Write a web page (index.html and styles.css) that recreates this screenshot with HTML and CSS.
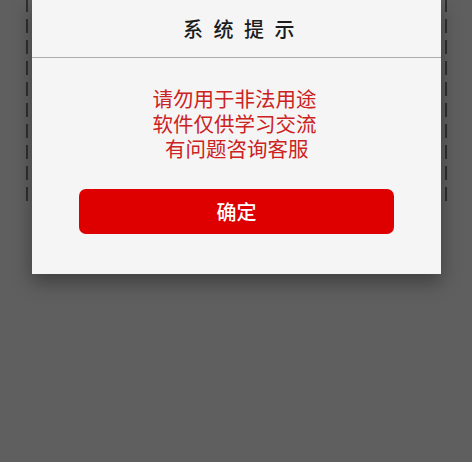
FILE: index.html
```html
<!DOCTYPE html>
<html lang="zh-CN">
<head>
    <meta charset="UTF-8">
    <title>系统提示</title>
    <link rel="stylesheet" href="styles.css">
</head>
<body>
<div class="frame"></div>

<div class="overlay">
    <div class="dialog">
        <div class="dialog-title">系统提示</div>
        <div class="dialog-body">
            <div class="notice">
                <span>请勿用于非法用途</span>
                <span>软件仅供学习交流</span>
                <span>&nbsp;有问题咨询客服</span>
            </div>
            <button type="button" class="confirm">确定</button>
        </div>
    </div>
</div>
</body>
</html>
```

FILE: styles.css
```css
body {
    margin: 0;
    height: 100vh;
    background: #5f5f5f;
    font-family: "Noto Sans CJK SC", "Noto Sans", sans-serif;
    overflow: hidden;
}

.frame {
    margin: 0 25px 0 26px;
    height: 209px;
    border-radius: 0 0 4px 4px;
    background-image:
        repeating-linear-gradient(to bottom, #2f2f2f 0 14px, transparent 14px 21px),
        repeating-linear-gradient(to bottom, #2f2f2f 0 14px, transparent 14px 21px);
    background-size: 2px 100%, 2px 100%;
    background-position: left -2px, right -2px;
    background-repeat: no-repeat;
}

.overlay {
    position: absolute;
    top: 0;
    left: 0;
    right: 0;
}

.dialog {
    width: 409px;
    margin-left: 32px;
    background: #f5f5f5;
    box-shadow: 0 8px 18px rgba(0, 0, 0, 0.35);
}

.dialog-title {
    height: 57px;
    display: flex;
    align-items: center;
    justify-content: center;
    padding-left: 15px;
    font-size: 20px;
    font-weight: 500;
    letter-spacing: 10.5px;
    color: #1c1c1c;
    border-bottom: 1px solid #ababab;
}

.dialog-body {
    padding: 28px 47px 40px;
}

.notice {
    display: flex;
    flex-direction: column;
    align-items: center;
    padding-right: 4px;
    margin-bottom: 28px;
    font-size: 20.5px;
    line-height: 25px;
    color: #cc2222;
}

.confirm {
    display: block;
    width: 100%;
    height: 45px;
    border: none;
    border-radius: 7px;
    background: #de0000;
    color: #fff;
    font-family: inherit;
    font-size: 20px;
    font-weight: 500;
    cursor: pointer;
}
```
